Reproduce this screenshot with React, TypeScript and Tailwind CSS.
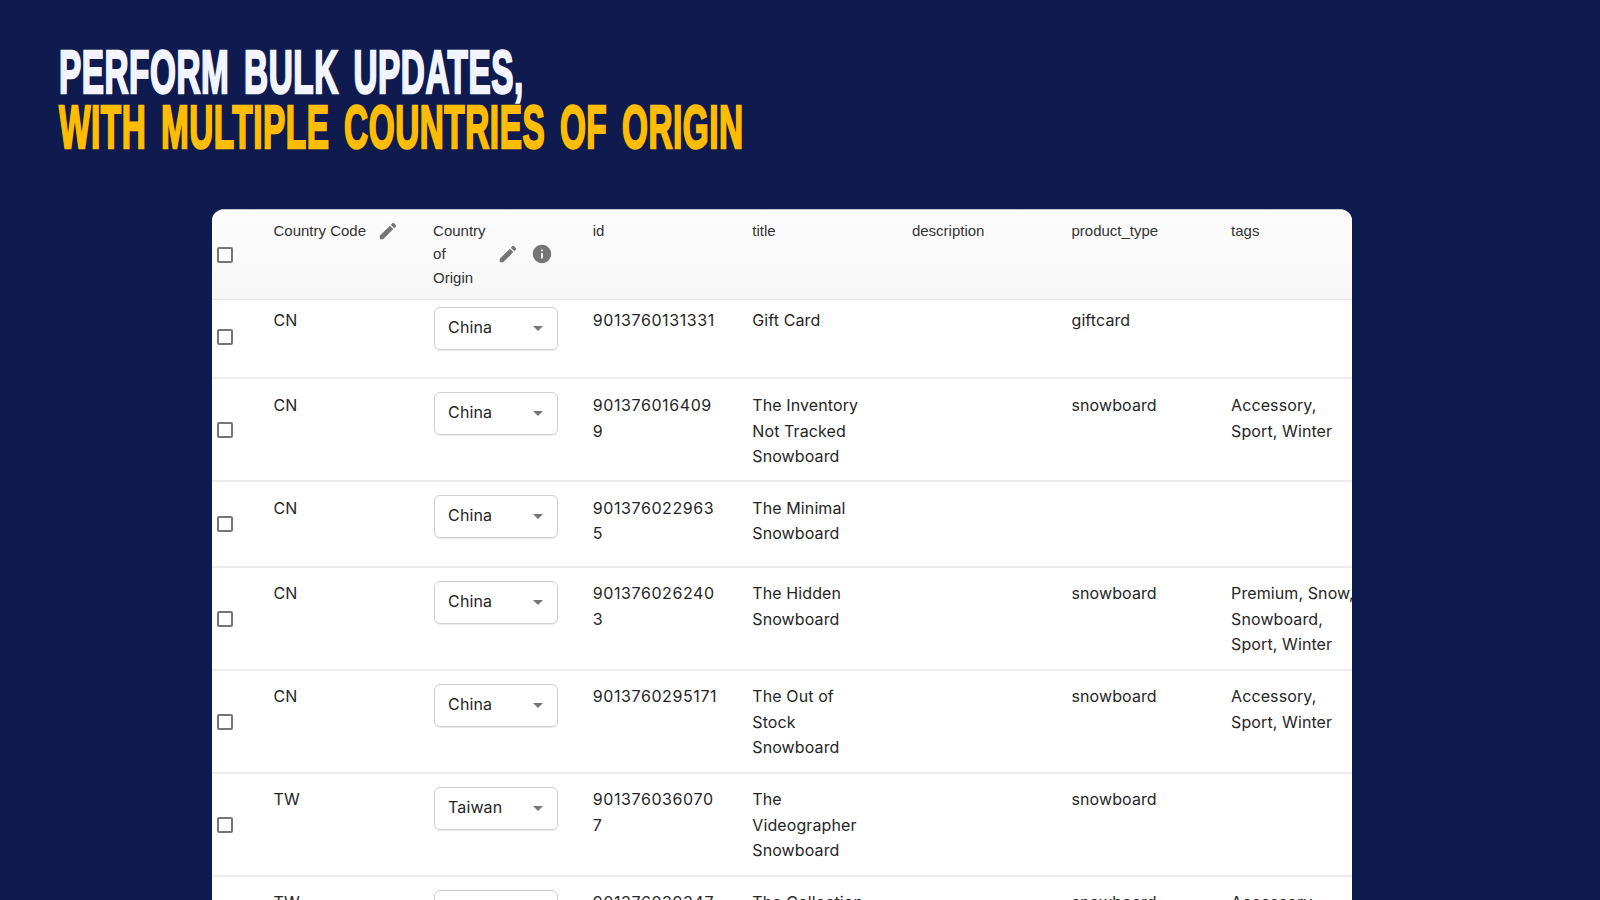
import React from 'react';

type Row = {
  code: string;
  country: string;
  id: string[];
  title: string[];
  type?: string;
  tags?: string[];
  height: string;
  pad: string;
  textPad: string;
  boxPad?: string;
};

const rows: Row[] = [
  { code: 'CN', country: 'China', id: ['9013760131331'], title: ['Gift Card'], type: 'giftcard', height: 'h-[79px]', pad: 'pt-[7px]', textPad: 'pt-[1px]', boxPad: 'pb-[4px]' },
  { code: 'CN', country: 'China', id: ['901376016409', '9'], title: ['The Inventory', 'Not Tracked', 'Snowboard'], type: 'snowboard', tags: ['Accessory,', 'Sport, Winter'], height: 'h-[103px]', pad: 'pt-[13px]', textPad: 'pt-[1px]' },
  { code: 'CN', country: 'China', id: ['901376022963', '5'], title: ['The Minimal', 'Snowboard'], height: 'h-[86px]', pad: 'pt-[13px]', textPad: 'pt-[0.5px]' },
  { code: 'CN', country: 'China', id: ['901376026240', '3'], title: ['The Hidden', 'Snowboard'], type: 'snowboard', tags: ['Premium, Snow,', 'Snowboard,', 'Sport, Winter'], height: 'h-[103px]', pad: 'pt-[13px]', textPad: 'pt-0' },
  { code: 'CN', country: 'China', id: ['9013760295171'], title: ['The Out of', 'Stock', 'Snowboard'], type: 'snowboard', tags: ['Accessory,', 'Sport, Winter'], height: 'h-[103px]', pad: 'pt-[13px]', textPad: 'pt-0' },
  { code: 'TW', country: 'Taiwan', id: ['901376036070', '7'], title: ['The', 'Videographer', 'Snowboard'], type: 'snowboard', height: 'h-[103px]', pad: 'pt-[13px]', textPad: 'pt-0' },
  { code: 'TW', country: 'Taiwan', id: ['901376039347'], title: ['The Collection'], type: 'snowboard', tags: ['Accessory,'], height: 'h-[103px]', pad: 'pt-[13px]', textPad: 'pt-0' },
];

function EditIcon() {
  return (
    <svg viewBox="0 0 24 24" className="w-[22px] h-[22px] shrink-0 fill-[#757575]">
      <path d="M3 17.25V21h3.75L17.81 9.94l-3.75-3.75L3 17.25zM20.71 7.04c.39-.39.39-1.02 0-1.41l-2.34-2.34a.9959.9959 0 0 0-1.41 0l-1.83 1.83 3.75 3.75 1.83-1.83z" />
    </svg>
  );
}

function InfoIcon() {
  return (
    <svg viewBox="0 0 24 24" className="w-[22px] h-[22px] shrink-0 fill-[#757575]">
      <path d="M12 2C6.48 2 2 6.48 2 12s4.48 10 10 10 10-4.48 10-10S17.52 2 12 2zm1 15h-2v-6h2v6zm0-8h-2V7h2v2z" />
    </svg>
  );
}

function Checkbox() {
  return <div className="w-[16px] h-[16px] rounded-[2px] border-2 border-[#757575] bg-white" />;
}

function Lines({ items, className }: { items?: string[]; className?: string }) {
  return (
    <div className={`whitespace-nowrap ${className ?? ''}`}>
      {(items ?? []).map((line) => (
        <div key={line}>{line}</div>
      ))}
    </div>
  );
}

function HeaderCell({ children }: { children: React.ReactNode }) {
  return <div className="w-[159.6px] shrink-0 pt-[9px]">{children}</div>;
}

export default function App() {
  return (
    <div className="h-[900px] overflow-hidden bg-[#0f1b4f] font-['Liberation_Sans',sans-serif]">
      <div className="pt-[45px] pl-[59px] h-[209px]">
        <h1 className="origin-left scale-x-[0.546] whitespace-nowrap text-[61px] leading-[55px] font-bold tracking-[1px] text-[#f2f5ff] [word-spacing:9px] [-webkit-text-stroke:2.4px_currentColor]">
          <div>PERFORM BULK UPDATES,</div>
          <div className="text-[#ffbc00]">WITH MULTIPLE COUNTRIES OF ORIGIN</div>
        </h1>
      </div>

      <div className="ml-[212px] w-[1140px] overflow-hidden rounded-t-[12px] border-t border-[#c9c9c9] bg-white text-[#262626]">
        <div className="flex h-[90px] border-b border-[#e6e6e6] bg-linear-to-b from-[#fdfdfd] to-[#f7f7f7] text-[15px] leading-[23.4px] text-[#333333]">
          <div className="flex w-[61.5px] shrink-0 items-center pl-[5px]">
            <Checkbox />
          </div>
          <HeaderCell>
            <div className="flex items-start">
              <span>Country Code</span>
              <span className="ml-[11px] mt-[1px]">
                <EditIcon />
              </span>
            </div>
          </HeaderCell>
          <HeaderCell>
            <div className="flex items-center">
              <div className="w-[64px]">
                <div>Country</div>
                <div>of</div>
                <div>Origin</div>
              </div>
              <EditIcon />
              <span className="ml-[12px]">
                <InfoIcon />
              </span>
            </div>
          </HeaderCell>
          <HeaderCell>id</HeaderCell>
          <HeaderCell>title</HeaderCell>
          <HeaderCell>description</HeaderCell>
          <HeaderCell>product_type</HeaderCell>
          <HeaderCell>tags</HeaderCell>
        </div>

        {rows.map((row) => (
          <div key={row.id[0]} className={`flex ${row.height} border-b-2 border-[#ececec] font-['Inter',sans-serif] text-[16px] leading-[25.5px] tracking-[0.1px]`}>
            <div className="flex w-[61.5px] shrink-0 items-center pl-[5px]">
              <div className={row.boxPad ?? ''}>
                <Checkbox />
              </div>
            </div>
            <div className={`w-[159.6px] shrink-0 ${row.pad}`}>
              <div className={row.textPad}>{row.code}</div>
            </div>
            <div className={`w-[159.6px] shrink-0 ${row.pad}`}>
              <div className="ml-[1px] flex h-[43px] w-[124px] items-center justify-between rounded-[6px] border border-[#cfcfcf] pl-[13px] pr-[14px] shadow-[0_1px_1px_rgba(0,0,0,0.08)]">
                <span className="pb-[2px]">{row.country}</span>
                <span className="h-0 w-0 border-x-[5px] border-t-[5px] border-x-transparent border-t-[#757575]" />
              </div>
            </div>
            <div className={`w-[159.6px] shrink-0 ${row.pad}`}>
              <div className={row.textPad}>
                <Lines items={row.id} className="tracking-[0.6px]" />
              </div>
            </div>
            {[row.title, undefined, row.type ? [row.type] : undefined, row.tags].map((cell, i) => (
              <div key={i} className={`w-[159.6px] shrink-0 ${row.pad}`}>
                <div className={row.textPad}>
                  <Lines items={cell} />
                </div>
              </div>
            ))}
          </div>
        ))}
      </div>
    </div>
  );
}
